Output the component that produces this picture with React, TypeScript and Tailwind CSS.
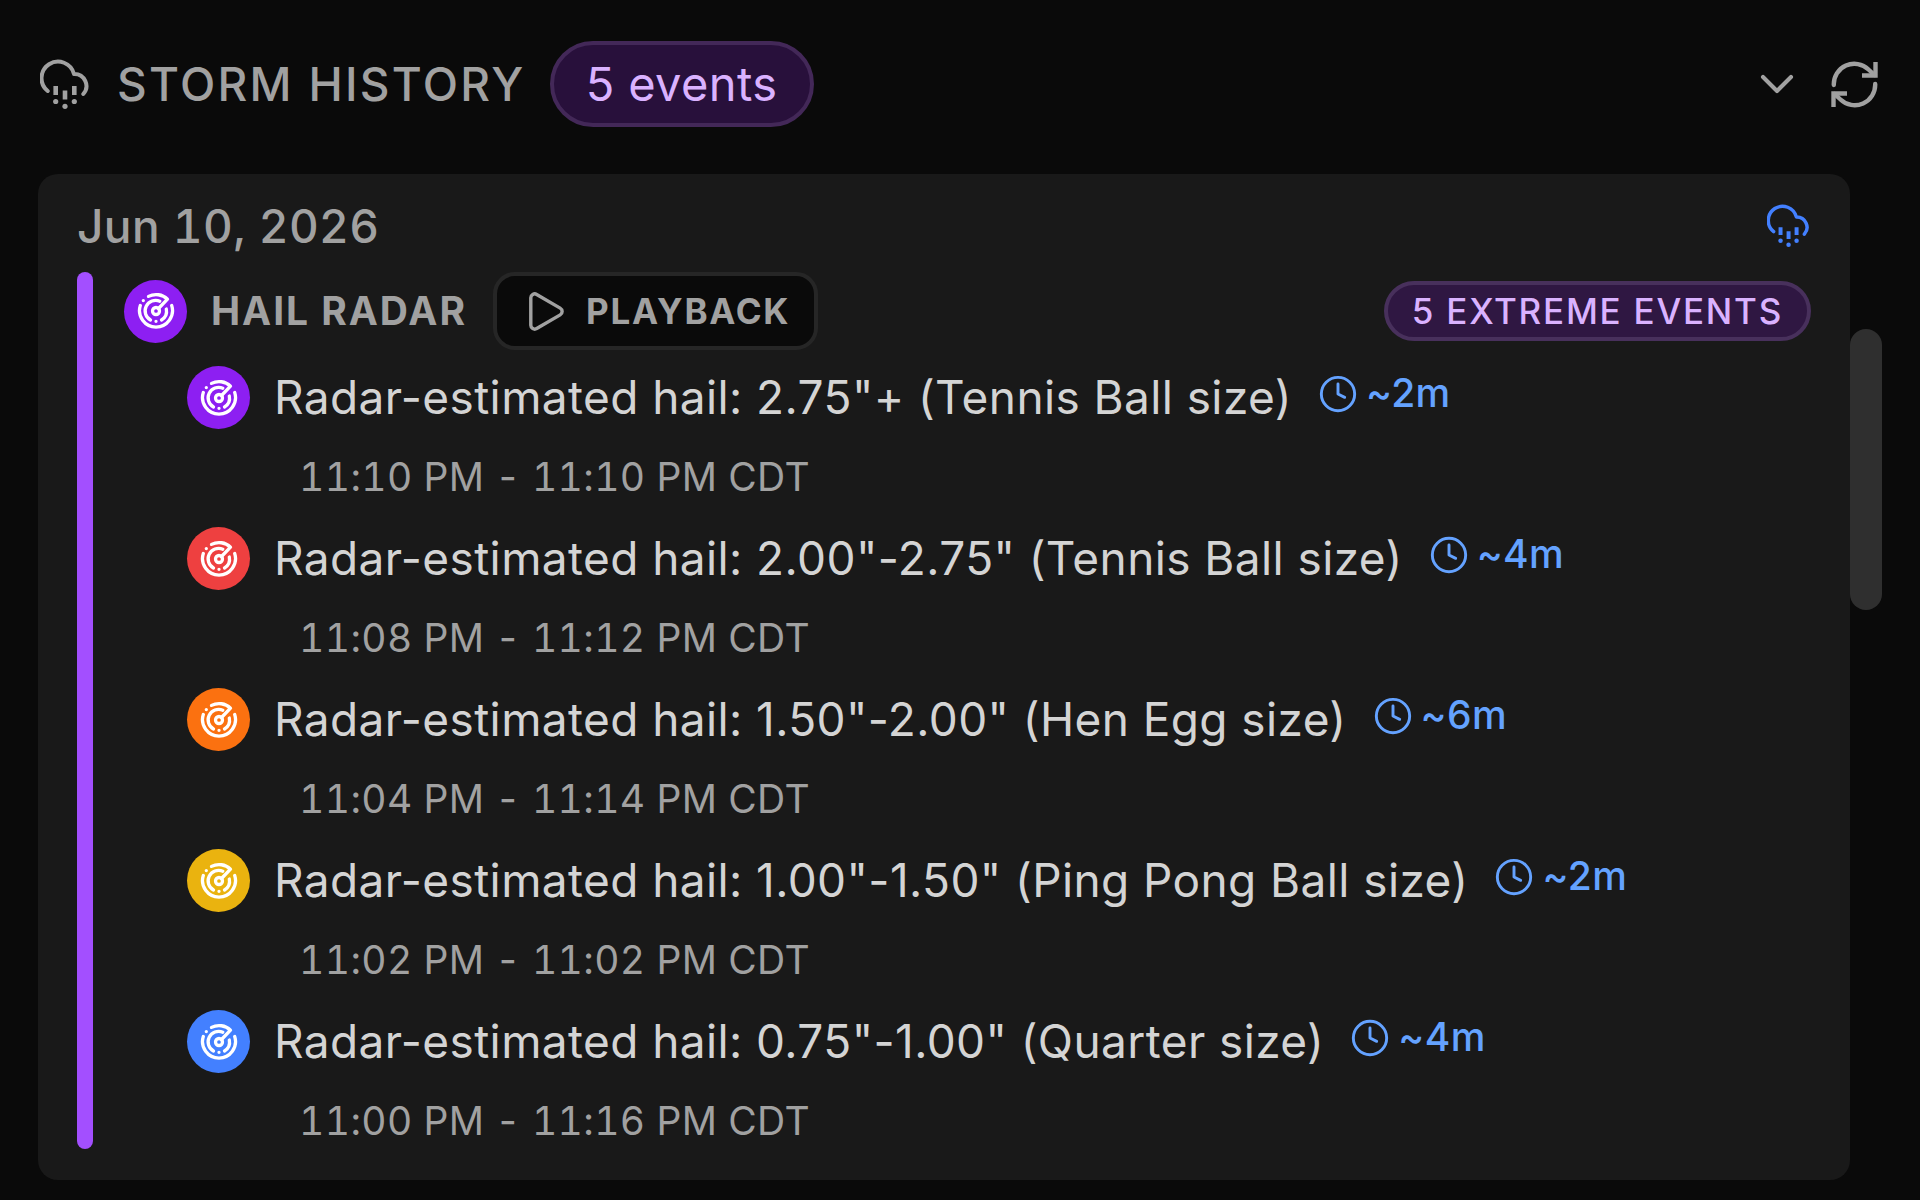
import { ChevronDown, Clock, Play } from "lucide-react";

const events = [
  { color: "bg-[#8d1ff2]", size: '2.75"+ (Tennis Ball size)', duration: "~2m", time: "11:10 PM - 11:10 PM CDT" },
  { color: "bg-[#ee4040]", size: '2.00"-2.75" (Tennis Ball size)', duration: "~4m", time: "11:08 PM - 11:12 PM CDT" },
  { color: "bg-[#fb7110]", size: '1.50"-2.00" (Hen Egg size)', duration: "~6m", time: "11:04 PM - 11:14 PM CDT" },
  { color: "bg-[#eab30f]", size: '1.00"-1.50" (Ping Pong Ball size)', duration: "~2m", time: "11:02 PM - 11:02 PM CDT" },
  { color: "bg-[#4380ff]", size: '0.75"-1.00" (Quarter size)', duration: "~4m", time: "11:00 PM - 11:16 PM CDT" },
];

const HailIcon = ({ className }: { className: string }) => (
  <svg viewBox="0 0 51 51" fill="none" stroke="currentColor" strokeWidth="4" className={className} aria-hidden="true">
    <path strokeLinecap="round" strokeLinejoin="round" d="M7.7 32A16.5 16.5 0 1 1 34 15A12 12 0 0 1 43.3 35" />
    <path strokeWidth="4.6" d="M15.7 27v9M25 31.500v9M34.300 27v9" />
    <g fill="currentColor" stroke="none">
      <circle cx="15.7" cy="42.5" r="2.6" />
      <circle cx="25" cy="47.3" r="2.6" />
      <circle cx="34.3" cy="42.5" r="2.6" />
    </g>
  </svg>
);

const RefreshIcon = () => (
  <svg viewBox="0 0 47 47" fill="none" stroke="currentColor" strokeWidth="4.4" className="size-[47px]" aria-hidden="true">
    <path strokeLinecap="round" d="M2.800 24A20.500 20.500 0 0 1 37.500 8.500L43.500 14" />
    <path strokeLinecap="round" d="M44.200 23A20.500 20.500 0 0 1 9.500 38.500L3.500 33" />
    <path d="M44.500 1v13.500H31M2.500 46V32.500H16" />
  </svg>
);

const RadarBadge = ({ color }: { color: string }) => (
  <span className={`flex size-[63px] shrink-0 items-center justify-center rounded-full text-white ${color}`}>
    <svg viewBox="0 0 38 38" fill="none" stroke="currentColor" strokeWidth="3.3" strokeLinecap="round" strokeLinejoin="round" className="size-[38px]" aria-hidden="true">
      <path d="M11.500 4.400A16.500 16.500 0 0 1 30.500 7.200L21.500 16.500" />
      <path d="M34.700 13.500A16.500 16.500 0 1 1 3.300 13.500" />
      <path d="M22.800 9.200A10.500 10.500 0 0 0 13.500 28" />
      <path d="M29.300 17A10.500 10.500 0 0 1 24.500 28" />
      <circle cx="19" cy="19" r="3.500" />
      <path d="M6.300 8.600h.01M19 29.300h.01" />
    </svg>
  </span>
);

const App = () => {
  return (
    <div className="min-h-screen bg-[#0a0a0a] font-['Inter',sans-serif] tracking-wide text-[#a1a1a1]">

      {/* Header */}
      <header className="flex h-[174px] items-center pt-0 pr-[42px] pb-[6px] pl-10">
        <HailIcon className="size-[51px] shrink-0" />
        <h1 className="ml-[26px] text-[46px] font-medium tracking-wider">STORM HISTORY</h1>
        <span className="ml-6 flex h-[86px] items-center rounded-full border-4 border-[#432858] bg-[#28103b] px-8 text-[47px] text-[#dab2ff]">
          5 events
        </span>
        <button aria-label="Collapse" className="ml-auto">
          <ChevronDown size={56} strokeWidth={1.75} />
        </button>
        <button aria-label="Refresh" className="ml-[26px]">
          <RefreshIcon />
        </button>
      </header>

      <div className="flex px-[38px] pb-5">
        <main className="min-w-0 flex-1 rounded-[20px] bg-[#191919] px-[39px] pb-[31px]">

          {/* Date */}
          <div className="flex h-[98px] items-center justify-between pt-[6px]">
            <h2 className="text-[46px] font-medium tabular-nums">Jun 10, 2026</h2>
            <HailIcon className="size-[44px] text-[#4380ff]" />
          </div>

          <div className="flex gap-[31px]">
            <div className="w-4 rounded-full bg-[#a34fff]" />

            <div className="min-w-0 flex-1">
              {/* Group heading */}
              <div className="flex h-[78px] items-center">
                <RadarBadge color="bg-[#8d1ff2]" />
                <h3 className="ml-6 text-[39px] font-bold tracking-wider">HAIL RADAR</h3>
                <button className="ml-[26px] flex h-[78px] items-center gap-[18px] rounded-[22px] border-4 border-[#262626] bg-[#0a0a0a] px-6 text-[35px] font-bold tracking-wider">
                  <Play size={47} strokeWidth={1.75} />
                  PLAYBACK
                </button>
                <span className="ml-auto flex h-[60px] items-center rounded-full border-4 border-[#48305c] bg-[#2f1742] px-6 text-[35px] font-medium tracking-wider text-[#dab2ff]">
                  5 EXTREME EVENTS
                </span>
              </div>

              {/* Events */}
              <ul className="ml-[63px] flex flex-col gap-[22px] pt-4">
                {events.map((event) => (
                  <li key={event.time}>
                    <div className="flex h-[63px] items-center">
                      <RadarBadge color={event.color} />
                      <span className="ml-6 text-[46px] text-[#d4d4d4]">Radar-estimated hail: {event.size}</span>
                      <span className="ml-[26px] flex items-center gap-2 pb-2 text-[39px] font-medium text-[#64a2ff]">
                        <Clock size={40} strokeWidth={1.75} />
                        {event.duration}
                      </span>
                    </div>
                    <p className="ml-28 pt-5 text-[39px] leading-[56px] tabular-nums">{event.time}</p>
                  </li>
                ))}
              </ul>
            </div>
          </div>
        </main>

        {/* Scrollbar thumb */}
        <div className="w-8 pt-[155px]">
          <div className="h-[281px] rounded-full bg-[#2f2f2f]" />
        </div>
      </div>
    </div>
  );
};

export default App;
